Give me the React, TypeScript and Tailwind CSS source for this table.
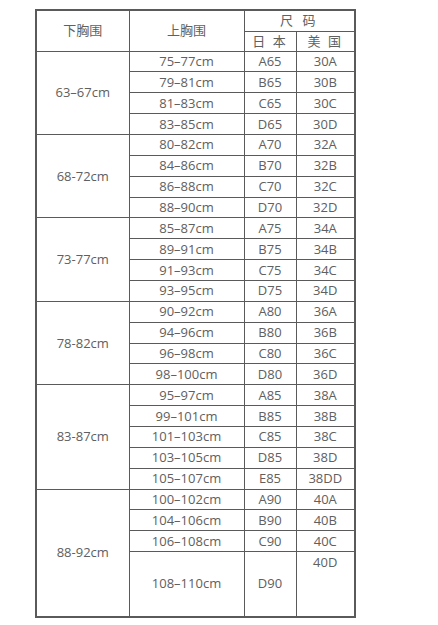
const groups: { under: string; rows: [string, string, string][] }[] = [
  {
    under: "63–67cm",
    rows: [
      ["75–77cm", "A65", "30A"],
      ["79–81cm", "B65", "30B"],
      ["81–83cm", "C65", "30C"],
      ["83–85cm", "D65", "30D"],
    ],
  },
  {
    under: "68-72cm",
    rows: [
      ["80–82cm", "A70", "32A"],
      ["84–86cm", "B70", "32B"],
      ["86–88cm", "C70", "32C"],
      ["88–90cm", "D70", "32D"],
    ],
  },
  {
    under: "73-77cm",
    rows: [
      ["85–87cm", "A75", "34A"],
      ["89–91cm", "B75", "34B"],
      ["91–93cm", "C75", "34C"],
      ["93–95cm", "D75", "34D"],
    ],
  },
  {
    under: "78-82cm",
    rows: [
      ["90–92cm", "A80", "36A"],
      ["94–96cm", "B80", "36B"],
      ["96–98cm", "C80", "36C"],
      ["98–100cm", "D80", "36D"],
    ],
  },
  {
    under: "83-87cm",
    rows: [
      ["95–97cm", "A85", "38A"],
      ["99–101cm", "B85", "38B"],
      ["101–103cm", "C85", "38C"],
      ["103–105cm", "D85", "38D"],
      ["105–107cm", "E85", "38DD"],
    ],
  },
];

const cell = "border border-[#5a5a5a] p-0 text-center align-middle";

export default function App() {
  return (
    <div
      className="min-h-screen bg-white pl-[35px] pt-[9px] text-[13px] leading-[17px] text-[#606060]"
      style={{ fontFamily: '"Open Sans", "Noto Sans CJK SC", sans-serif' }}
    >
      <table className="w-[319px] table-fixed border-collapse border-2 border-[#5a5a5a]">
        <colgroup>
          <col className="w-[93px]" />
          <col className="w-[115px]" />
          <col className="w-[52px]" />
          <col className="w-[59px]" />
        </colgroup>
        <thead>
          <tr className="h-[21px]">
            <th rowSpan={2} className={`${cell} font-normal`}>
              下胸围
            </th>
            <th rowSpan={2} className={`${cell} font-normal`}>
              上胸围
            </th>
            <th colSpan={2} className={`${cell} font-normal tracking-[3px]`}>
              尺 码
            </th>
          </tr>
          <tr className="h-[20px]">
            <th className={`${cell} font-normal tracking-[2px]`}>日 本</th>
            <th className={`${cell} font-normal tracking-[2px]`}>美 国</th>
          </tr>
        </thead>
        <tbody>
          {groups.map((g) =>
            g.rows.map((r, i) => (
              <tr key={r[1]} className="h-[20.87px]">
                {i === 0 && (
                  <td rowSpan={g.rows.length} className={cell}>
                    {g.under}
                  </td>
                )}
                <td className={cell}>{r[0]}</td>
                <td className={cell}>{r[1]}</td>
                <td className={cell}>{r[2]}</td>
              </tr>
            ))
          )}
          <tr className="h-[20.87px]">
            <td rowSpan={4} className={cell}>
              88-92cm
            </td>
            <td className={cell}>100–102cm</td>
            <td className={cell}>A90</td>
            <td className={cell}>40A</td>
          </tr>
          <tr className="h-[20.87px]">
            <td className={cell}>104–106cm</td>
            <td className={cell}>B90</td>
            <td className={cell}>40B</td>
          </tr>
          <tr className="h-[20.87px]">
            <td className={cell}>106–108cm</td>
            <td className={cell}>C90</td>
            <td className={cell}>40C</td>
          </tr>
          <tr className="h-[65px]">
            <td className={cell}>108–110cm</td>
            <td className={cell}>D90</td>
            <td className={`${cell} !align-top pt-[2px]`}>40D</td>
          </tr>
        </tbody>
      </table>
    </div>
  );
}
